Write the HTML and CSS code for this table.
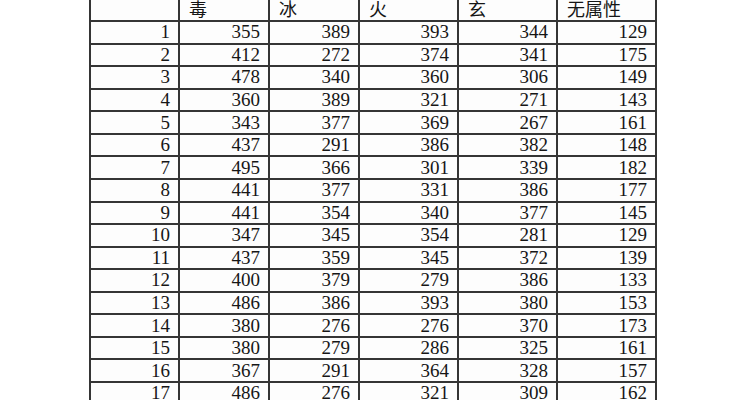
FILE: index.html
```html
<!DOCTYPE html>
<html lang="zh">
<head>
<meta charset="utf-8">
<title>属性表</title>
<link rel="stylesheet" href="styles.css">
</head>
<body>
<div class="sheet">
  <div class="cell head"></div><div class="cell head">毒</div><div class="cell head">冰</div><div class="cell head">火</div><div class="cell head">玄</div><div class="cell head">无属性</div>
  <div class="cell num">1</div><div class="cell num">355</div><div class="cell num">389</div><div class="cell num">393</div><div class="cell num">344</div><div class="cell num">129</div>
  <div class="cell num">2</div><div class="cell num">412</div><div class="cell num">272</div><div class="cell num">374</div><div class="cell num">341</div><div class="cell num">175</div>
  <div class="cell num">3</div><div class="cell num">478</div><div class="cell num">340</div><div class="cell num">360</div><div class="cell num">306</div><div class="cell num">149</div>
  <div class="cell num">4</div><div class="cell num">360</div><div class="cell num">389</div><div class="cell num">321</div><div class="cell num">271</div><div class="cell num">143</div>
  <div class="cell num">5</div><div class="cell num">343</div><div class="cell num">377</div><div class="cell num">369</div><div class="cell num">267</div><div class="cell num">161</div>
  <div class="cell num">6</div><div class="cell num">437</div><div class="cell num">291</div><div class="cell num">386</div><div class="cell num">382</div><div class="cell num">148</div>
  <div class="cell num">7</div><div class="cell num">495</div><div class="cell num">366</div><div class="cell num">301</div><div class="cell num">339</div><div class="cell num">182</div>
  <div class="cell num">8</div><div class="cell num">441</div><div class="cell num">377</div><div class="cell num">331</div><div class="cell num">386</div><div class="cell num">177</div>
  <div class="cell num">9</div><div class="cell num">441</div><div class="cell num">354</div><div class="cell num">340</div><div class="cell num">377</div><div class="cell num">145</div>
  <div class="cell num">10</div><div class="cell num">347</div><div class="cell num">345</div><div class="cell num">354</div><div class="cell num">281</div><div class="cell num">129</div>
  <div class="cell num">11</div><div class="cell num">437</div><div class="cell num">359</div><div class="cell num">345</div><div class="cell num">372</div><div class="cell num">139</div>
  <div class="cell num">12</div><div class="cell num">400</div><div class="cell num">379</div><div class="cell num">279</div><div class="cell num">386</div><div class="cell num">133</div>
  <div class="cell num">13</div><div class="cell num">486</div><div class="cell num">386</div><div class="cell num">393</div><div class="cell num">380</div><div class="cell num">153</div>
  <div class="cell num">14</div><div class="cell num">380</div><div class="cell num">276</div><div class="cell num">276</div><div class="cell num">370</div><div class="cell num">173</div>
  <div class="cell num">15</div><div class="cell num">380</div><div class="cell num">279</div><div class="cell num">286</div><div class="cell num">325</div><div class="cell num">161</div>
  <div class="cell num">16</div><div class="cell num">367</div><div class="cell num">291</div><div class="cell num">364</div><div class="cell num">328</div><div class="cell num">157</div>
  <div class="cell num">17</div><div class="cell num">486</div><div class="cell num">276</div><div class="cell num">321</div><div class="cell num">309</div><div class="cell num">162</div>
</div>
</body>
</html>
```
FILE: styles.css
```css
html, body {
  margin: 0;
  padding: 0;
  background: #ffffff;
  overflow: hidden;
}

body {
  width: 750px;
  height: 400px;
}

.sheet {
  display: grid;
  grid-template-columns: 87px 88px 88px 97px 97px 97px;
  grid-template-rows: 21px;
  grid-auto-rows: 20.5625px;
  gap: 2px;
  width: max-content;
  margin: -3px 0 0 89px;
  padding: 2px;
  background: #353535;
  color: #161616;
}

.cell {
  background: #fdfdfd;
  display: flex;
  align-items: center;
  overflow: hidden;
  white-space: nowrap;
}

.head {
  font-family: "Noto Sans CJK SC", "Noto Sans CJK JP", sans-serif;
  font-size: 18px;
  padding: 0 0 3px 9px;
  justify-content: flex-start;
  box-sizing: border-box;
}

.num {
  font-family: "Liberation Serif", "Times New Roman", serif;
  font-size: 19px;
  justify-content: flex-end;
  padding-right: 8px;
}
```
